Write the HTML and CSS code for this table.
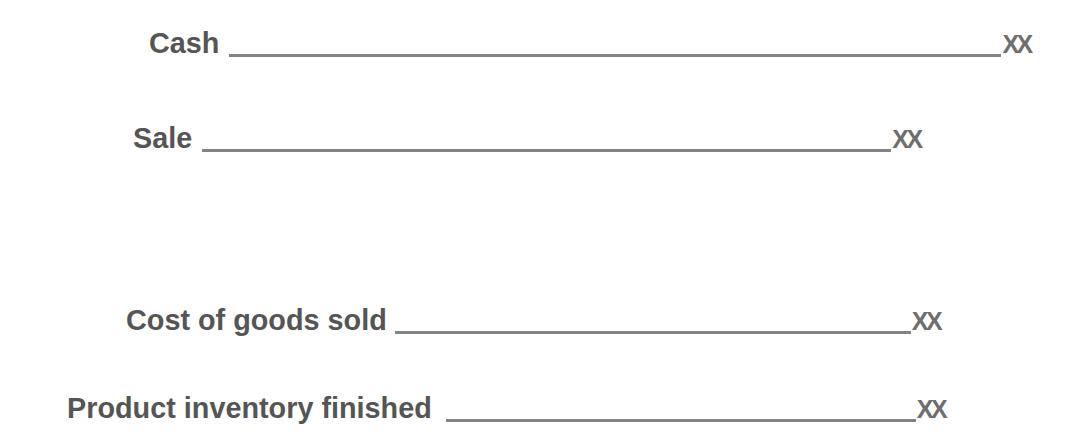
FILE: index.html
```html
<!DOCTYPE html>
<html>
<head>
<meta charset="utf-8">
<link rel="stylesheet" href="styles.css">
</head>
<body>
<div class="sheet">
  <div class="row row-cash">
    <span class="label">Cash</span>
    <span class="rule rule-cash"></span>
    <span class="amount">XX</span>
  </div>
  <div class="row row-sale">
    <span class="label">Sale</span>
    <span class="rule rule-sale"></span>
    <span class="amount">XX</span>
  </div>
  <div class="row row-cogs">
    <span class="label">Cost of goods sold</span>
    <span class="rule rule-cogs"></span>
    <span class="amount">XX</span>
  </div>
  <div class="row row-inv">
    <span class="label">Product inventory finished</span>
    <span class="rule rule-inv"></span>
    <span class="amount">XX</span>
  </div>
</div>
</body>
</html>
```

FILE: styles.css
```css
html, body {
  margin: 0;
  padding: 0;
  background: #ffffff;
}

.sheet {
  width: 1080px;
  height: 440px;
  padding-top: 26px;
  box-sizing: border-box;
  font-family: "Liberation Sans", Arial, sans-serif;
}

.row {
  display: flex;
  align-items: baseline;
  line-height: 34px;
  height: 34px;
}

.label {
  font-size: 28.8px;
  font-weight: bold;
  color: #555555;
}

.rule {
  align-self: flex-end;
  height: 0;
  border-bottom: 3px solid #838383;
  margin-bottom: 3px;
}

.amount {
  font-size: 25px;
  font-weight: bold;
  color: #6e6e6e;
  letter-spacing: -2.5px;
  margin-left: 1px;
}

.row-cash { padding-left: 149px; }
.row-sale { padding-left: 133px; margin-top: 61px; }
.row-cogs { padding-left: 126px; margin-top: 148px; }
.row-inv  { padding-left: 67px;  margin-top: 54px; }

.rule-cash { width: 772px; margin-left: 10px; }
.rule-sale { width: 689px; margin-left: 10px; }
.rule-cogs { width: 516px; margin-left: 8px; }
.rule-inv  { width: 470px; margin-left: 14px; }
```
